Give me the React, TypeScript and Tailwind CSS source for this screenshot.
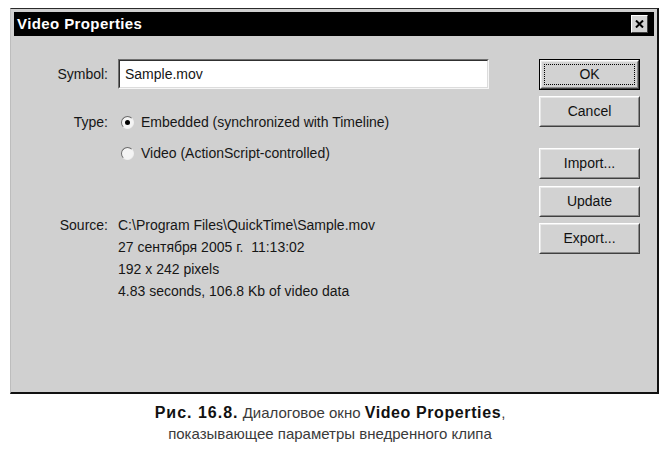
const ui = { fontFamily: "'Liberation Sans', Arial, sans-serif" }

function WinButton({ label, primary }: { label: string; primary?: boolean }) {
  return (
    <div className={`h-[31px] w-[101px] ${primary ? "border border-black" : ""}`}>
      <div className="h-full w-full border border-t-white border-l-white border-r-[#404040] border-b-[#404040] bg-[#d2d2d2]">
        <div className="h-full w-full border border-t-[#e8e8e8] border-l-[#e8e8e8] border-r-[#8a8a8a] border-b-[#8a8a8a] p-[2px]">
          <div className={`flex h-full w-full items-center justify-center text-[14px] text-[#111] ${primary ? "border border-dotted border-black" : ""}`}>
            {label}
          </div>
        </div>
      </div>
    </div>
  )
}

function Radio({ checked, label }: { checked?: boolean; label: string }) {
  return (
    <div className="flex h-[22px] items-center gap-[7px]">
      <div className="flex h-[13px] w-[13px] items-center justify-center rounded-full border border-t-[#6a6a6a] border-l-[#6a6a6a] border-r-[#f0f0f0] border-b-[#f0f0f0] bg-[#f4f4f4]">
        {checked && <div className="h-[5px] w-[5px] rounded-full bg-black" />}
      </div>
      <span>{label}</span>
    </div>
  )
}

export default function App() {
  return (
    <div className="h-[456px] w-[666px] bg-white pt-[8px] pl-[10px]" style={ui}>
      <div className="h-[386px] w-[649px] border-t border-l border-r-2 border-b-2 border-t-[#2a2a2a] border-l-[#bdbdbd] border-r-[#111] border-b-[#111] bg-[#d0d0d0] p-[3px]">
        <div className="flex h-[24px] items-center justify-between bg-black pl-[3px] pr-[6px]">
          <span className="text-[15px] font-bold tracking-[0.4px] text-white">Video Properties</span>
          <div className="flex h-[18px] w-[17px] items-center justify-center border border-t-white border-l-white border-r-[#404040] border-b-[#404040] bg-[#d2d2d2]">
            <svg width="9" height="8" viewBox="0 0 9 8">
              <path d="M1 0.5 L8 7.5 M8 0.5 L1 7.5" stroke="#000" strokeWidth="2" />
            </svg>
          </div>
        </div>

        <div className="flex text-[14px] text-[#161616]">
          <div className="grid flex-1 grid-cols-[94px_1fr] gap-x-[10px] pt-[23px]">
            <div className="flex h-[30px] items-center justify-end">Symbol:</div>
            <div className="h-[30px] w-[371px] border border-t-[#707070] border-l-[#707070] border-r-[#f6f6f6] border-b-[#f6f6f6]">
              <div className="flex h-full w-full items-center border border-t-[#303030] border-l-[#303030] border-r-[#dcdcdc] border-b-[#dcdcdc] bg-white pl-[5px]">
                Sample.mov
              </div>
            </div>

            <div className="mt-[22px] flex h-[22px] items-center justify-end">Type:</div>
            <div className="mt-[22px] flex flex-col gap-[9px] pl-[3px]">
              <Radio checked label="Embedded (synchronized with Timeline)" />
              <Radio label="Video (ActionScript-controlled)" />
            </div>

            <div className="mt-[50px] flex h-[22px] items-center justify-end">Source:</div>
            <div className="mt-[50px] flex flex-col leading-[22px]">
              <span>C:\Program Files\QuickTime\Sample.mov</span>
              <span>27 сентября 2005 г.&nbsp; 11:13:02</span>
              <span>192 x 242 pixels</span>
              <span>4.83 seconds, 106.8 Kb of video data</span>
            </div>
          </div>

          <div className="flex flex-col pt-[23px] pr-[14px]">
            <WinButton label="OK" primary />
            <div className="mt-[6px]"><WinButton label="Cancel" /></div>
            <div className="mt-[21px]"><WinButton label="Import..." /></div>
            <div className="mt-[7px]"><WinButton label="Update" /></div>
            <div className="mt-[6px]"><WinButton label="Export..." /></div>
          </div>
        </div>
      </div>

      <div className="mt-[8px] -ml-[10px] flex flex-col items-center pr-[6px] text-[15px] leading-[21px] text-[#3a3a3a]">
        <p>
          <b className="text-[16px] tracking-[1px] text-[#111]">Рис. 16.8.</b> Диалоговое окно{" "}
          <b className="text-[16px] tracking-[0.6px] text-[#111]">Video Properties</b>,
        </p>
        <p>показывающее параметры внедренного клипа</p>
      </div>
    </div>
  )
}
